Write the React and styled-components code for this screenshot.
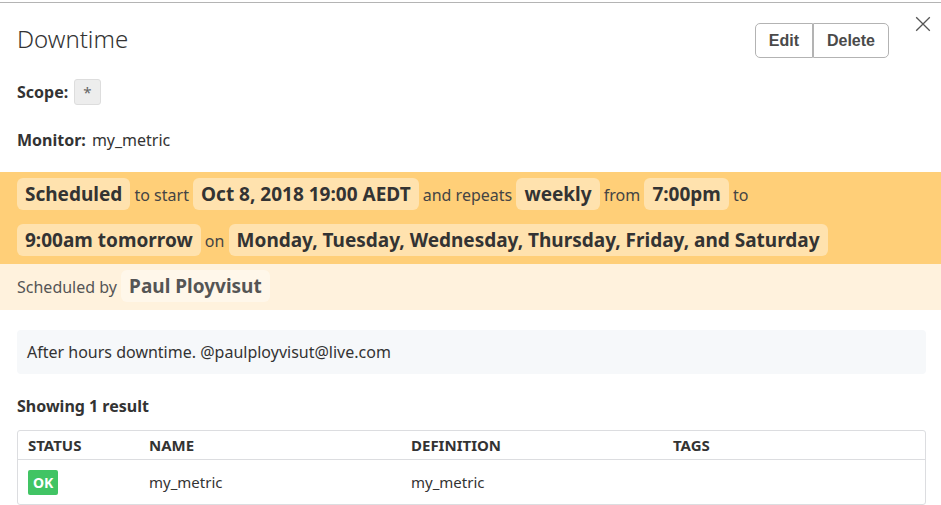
import React from "react";
import styled, { createGlobalStyle } from "styled-components";

const GlobalStyle = createGlobalStyle`
  * { box-sizing: border-box; }
  body {
    margin: 0;
    background: #fff;
    color: #333;
    font-family: "Noto Sans", "Open Sans", sans-serif;
    font-size: 16px;
    line-height: 24px;
  }
`;

const Panel = styled.main`
  margin-top: 2px;
  border-top: 1px solid #b4b4b4;
`;

const Header = styled.header`
  display: flex;
  align-items: flex-start;
  padding: 13px 10px 0 17px;
`;

const Title = styled.h1`
  flex: 1;
  margin: 7px 0 0;
  font-size: 24px;
  font-weight: 300;
  line-height: 32px;
`;

const ButtonGroup = styled.div`
  display: flex;
  margin: 7px 26px 0 0;
`;

const Button = styled.button`
  height: 35px;
  padding: 0 13px;
  border: 1px solid #b3b3b3;
  background: #fff;
  color: #4a4a4a;
  font: 700 16px "Liberation Sans", Arial, sans-serif;
  cursor: pointer;

  &:first-child { border-radius: 5px 0 0 5px; }
  &:last-child { border-radius: 0 5px 5px 0; }
`;

const CloseButton = styled.button`
  display: flex;
  padding: 0;
  border: 0;
  background: none;
  color: #555;
  cursor: pointer;
`;

const Field = styled.p`
  display: flex;
  align-items: center;
  gap: 6px;
  margin: 0;
  padding: 0 17px;
`;

const Fields = styled.section`
  display: grid;
  gap: 23px;
  padding: 21px 0 20px;
`;

const Label = styled.strong`
  font-weight: 700;
`;

const Tag = styled.code`
  padding: 0 8px;
  border: 1px solid #ddd;
  border-radius: 3px;
  background: #ededed;
  color: #666;
  font-family: inherit;
  font-size: 15px;
  line-height: 24px;
`;

const Banner = styled.p`
  margin: 0;
  padding: 0 17px;
  background: ${(p) => (p.$light ? "#fff2dd" : "#ffcf78")};
  color: ${(p) => (p.$light ? "#555" : "#444")};
  line-height: 46px;
`;

const Chip = styled.strong`
  display: inline-block;
  padding: 0 8px;
  border-radius: 6px;
  background: rgba(255, 255, 255, 0.4);
  color: ${(p) => (p.$muted ? "#555" : "#333")};
  font-size: 19px;
  font-weight: 700;
  line-height: 32px;
`;

const Content = styled.section`
  padding: 20px 15px 0 17px;
`;

const Message = styled.p`
  margin: 0;
  padding: 10px;
  border-radius: 4px;
  background: #f6f8fa;
`;

const ResultCount = styled.h2`
  margin: 20px 0 12px;
  font-size: 16px;
  font-weight: 700;
  line-height: 24px;
`;

const Table = styled.table`
  width: 100%;
  border: 1px solid #dcdde0;
  border-radius: 3px;
  border-spacing: 0;
  table-layout: fixed;
  font-size: 15px;
`;

const HeadCell = styled.th`
  width: ${(p) => p.$width || "auto"};
  height: 29px;
  padding: 0 10px;
  border-bottom: 1px solid #dcdde0;
  font-weight: 700;
  text-align: left;
  text-transform: uppercase;
`;

const Cell = styled.td`
  height: 44px;
  padding: 0 10px;
`;

const Status = styled.span`
  display: block;
  width: fit-content;
  padding: 0 5px;
  border-radius: 2px;
  background: #41c464;
  color: #fff;
  font-size: 14px;
  font-weight: 700;
  line-height: 25px;
`;

export default function App() {
  return (
    <>
      <GlobalStyle />
      <Panel>
        <Header>
          <Title>Downtime</Title>
          <ButtonGroup>
            <Button type="button">Edit</Button>
            <Button type="button">Delete</Button>
          </ButtonGroup>
          <CloseButton type="button" aria-label="Close">
            <svg width="16" height="16" viewBox="0 0 16 16" fill="none" stroke="currentColor" strokeWidth="1.3">
              <path d="M1.2 1.2 14.8 14.8M14.8 1.2 1.2 14.8" />
            </svg>
          </CloseButton>
        </Header>
        <Fields>
          <Field><Label>Scope:</Label> <Tag>*</Tag></Field>
          <Field><Label>Monitor:</Label> my_metric</Field>
        </Fields>
        <Banner>
          <Chip>Scheduled</Chip> to start <Chip>Oct 8, 2018 19:00 AEDT</Chip> and repeats{" "}
          <Chip>weekly</Chip> from <Chip>7:00pm</Chip> to <Chip>9:00am tomorrow</Chip> on{" "}
          <Chip>Monday, Tuesday, Wednesday, Thursday, Friday, and Saturday</Chip>
        </Banner>
        <Banner $light>
          Scheduled by <Chip $muted>Paul Ployvisut</Chip>
        </Banner>
        <Content>
          <Message>After hours downtime. @paulployvisut@live.com</Message>
          <ResultCount>Showing 1 result</ResultCount>
          <Table>
            <thead>
              <tr>
                <HeadCell scope="col" $width="121px">Status</HeadCell>
                <HeadCell scope="col">Name</HeadCell>
                <HeadCell scope="col">Definition</HeadCell>
                <HeadCell scope="col">Tags</HeadCell>
              </tr>
            </thead>
            <tbody>
              <tr>
                <Cell><Status>OK</Status></Cell>
                <Cell>my_metric</Cell>
                <Cell>my_metric</Cell>
                <Cell />
              </tr>
            </tbody>
          </Table>
        </Content>
      </Panel>
    </>
  );
}
